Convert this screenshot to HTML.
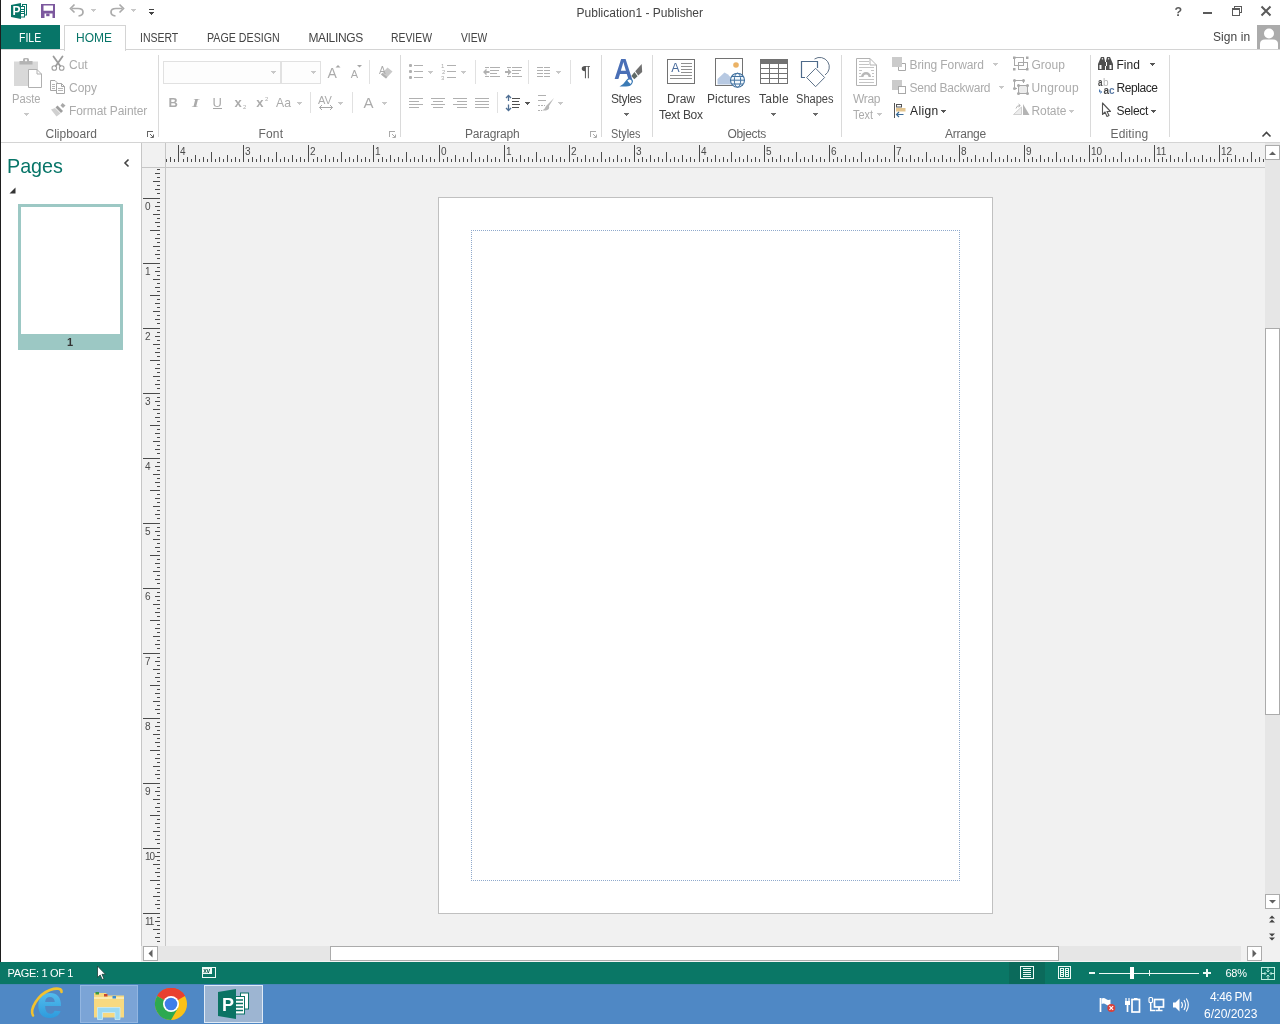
<!DOCTYPE html>
<html lang="en"><head><meta charset="utf-8"><title>Publication1 - Publisher</title>
<style>
html,body{margin:0;padding:0;background:#fff;}
body{width:1280px;height:1024px;overflow:hidden;font-family:"Liberation Sans",sans-serif;font-size:12px;color:#444;}
#app{position:absolute;left:0;top:0;width:1280px;height:1024px;overflow:hidden;background:#fff;}
#app div,#app span.t,#app svg{position:absolute;}
.t{white-space:pre;line-height:1;}
svg{overflow:visible;will-change:transform;}
.sep{width:1px;background:#e1e1e1;}
.gsep{width:1px;background:#dadada;top:55px;height:82px;}
.rl{font-size:10px;color:#4a4a4a;}
#txt,#rl{left:0;top:0;width:1280px;height:1024px;will-change:transform;}

</style></head>
<body>
<div id="app">

<!-- frame.html -->
<!-- window left edge -->
<div style="left:0;top:0;width:1px;height:984px;background:#1e1e1e"></div>
<!-- FILE tab -->
<div style="left:1px;top:25px;width:59px;height:24px;background:#077568"></div>
<!-- ribbon top border -->
<div style="left:1px;top:49px;width:1279px;height:1px;background:#d4d4d4"></div>
<!-- HOME tab -->
<div style="left:64px;top:25px;width:60px;height:25px;background:#fff;border:1px solid #d4d4d4;border-bottom:none;box-sizing:content-box"></div>
<!-- ribbon bottom border -->
<div style="left:1px;top:142px;width:1279px;height:1px;background:#d4d4d4"></div>
<!-- avatar -->
<div style="left:1257px;top:25px;width:23px;height:24px;background:#ababab;overflow:hidden">
 <svg width="23" height="24" viewBox="0 0 23 24"><circle cx="12" cy="8.5" r="5" fill="#fff"/><path d="M3 24 V19 Q3 14.5 8 14.5 H16 Q21 14.5 21 19 V24 Z" fill="#fff"/></svg>
</div>
<!-- group separators -->
<div class="gsep" style="left:158px"></div>
<div class="gsep" style="left:400px"></div>
<div class="gsep" style="left:601px"></div>
<div class="gsep" style="left:652px"></div>
<div class="gsep" style="left:841px"></div>
<div class="gsep" style="left:1090px"></div>
<div class="gsep" style="left:1169px"></div>
<!-- font combos -->
<div style="left:163px;top:61px;width:118px;height:23px;box-sizing:border-box;border:1px solid #e1e1e1;background:#fdfdfd"></div>
<div style="left:281px;top:61px;width:40px;height:23px;box-sizing:border-box;border:1px solid #e1e1e1;background:#fdfdfd"></div>
<!-- small separators -->
<div class="sep" style="left:369px;top:60px;height:24px"></div>
<div class="sep" style="left:310px;top:92px;height:21px"></div>
<div class="sep" style="left:352px;top:92px;height:21px"></div>
<div class="sep" style="left:475px;top:60px;height:24px"></div>
<div class="sep" style="left:528px;top:60px;height:24px"></div>
<div class="sep" style="left:570px;top:60px;height:24px"></div>
<div class="sep" style="left:497px;top:92px;height:21px"></div>

<!-- ribbon_icons.html -->
<svg style="left:0;top:0" width="1280" height="143" viewBox="0 0 1280 143">
<rect x="22.5" y="4.5" width="4" height="10.5" fill="#fff" stroke="#077568" stroke-width="1"/>
<rect x="20.5" y="6.5" width="4" height="10.5" fill="#fff" stroke="#077568" stroke-width="1"/>
<path d="M21 9.5h3M21 11.5h3M21 13.5h3" stroke="#077568" stroke-width="1"/>
<path d="M11 5 L21 3 V19 L11 17 Z" fill="#077568"/>
<text x="12.600" y="15.300" font-family="Liberation Sans, sans-serif" font-weight="700" font-size="12" fill="#fff">P</text>
<path d="M41 4h14v14h-14z M43.5 5.5v5.3h9.5v-5.3z M44.5 13.5v4.5h8v-4.5z" fill="#7c589e" fill-rule="evenodd"/>
<rect x="46.200" y="13.500" width="3.300" height="2.700" fill="#7c589e"/>
<path d="M72 8.5 H78 Q83 8.5 83 12 Q83 15.5 78.5 16" fill="none" stroke="#ababab" stroke-width="1.700"/>
<path d="M74.5 4.5 L70.5 8.5 L74.5 12.5" fill="none" stroke="#ababab" stroke-width="1.700"/>
<path d="M91 9h5v1h-1v1h-1v1h-1v-1h-1v-1h-1z" fill="#c8c8c8" shape-rendering="crispEdges"/>
<path d="M122 8.5 H116 Q111 8.5 111 12 Q111 15.5 115.5 16" fill="none" stroke="#ababab" stroke-width="1.700"/>
<path d="M119.5 4.5 L123.5 8.5 L119.5 12.5" fill="none" stroke="#ababab" stroke-width="1.700"/>
<path d="M131 9h5v1h-1v1h-1v1h-1v-1h-1v-1h-1z" fill="#c8c8c8" shape-rendering="crispEdges"/>
<rect x="149" y="9" width="5" height="1" fill="#444444" shape-rendering="crispEdges"/>
<path d="M149 12h5v1h-1v1h-1v1h-1v-1h-1v-1h-1z" fill="#444444" shape-rendering="crispEdges"/>
<text x="1174.5" y="16" font-family="Liberation Sans, sans-serif" font-weight="700" font-size="12.5" fill="#5a5a5a">?</text>
<rect x="1203" y="12" width="9" height="2" fill="#5a5a5a" shape-rendering="crispEdges"/>
<path d="M1234.5 8.5v-2h7v6h-2 M1232.5 9h7v6.5h-7z" fill="none" stroke="#5a5a5a" stroke-width="1" shape-rendering="crispEdges"/>
<rect x="1232" y="8" width="8" height="2" fill="#5a5a5a" shape-rendering="crispEdges"/>
<rect x="1234" y="6" width="8" height="1" fill="#5a5a5a" shape-rendering="crispEdges"/>
<path d="M1261.5 6.5 L1270.5 15.5 M1270.5 6.5 L1261.5 15.5" stroke="#5a5a5a" stroke-width="2" fill="none"/>
<path d="M1262.5 136.5 L1266.5 132.5 L1270.5 136.5" fill="none" stroke="#444444" stroke-width="1.6"/>
<rect x="14" y="61.5" width="24" height="24.5" fill="#d9d9d9"/>
<path d="M19.5 61h13v3.5h-13z M23 61v-1.5q0-1.5 1.5-1.5h3q1.5 0 1.5 1.5v1.5z" fill="#b4b4b4"/>
<circle cx="26" cy="60.3" r="1.1" fill="#fff"/>
<path d="M28.5 69.5h8.5l4.5 4.5v13.5h-13z" fill="#fff" stroke="#b0b0b0" stroke-width="1"/>
<path d="M37 69.5v4.5h4.5" fill="none" stroke="#b0b0b0" stroke-width="1"/>
<path d="M24 113h5v1h-1v1h-1v1h-1v-1h-1v-1h-1z" fill="#c8c8c8" shape-rendering="crispEdges"/>
<path d="M53.5 56.5 L60.2 66 M62.5 56.5 L55.8 66" fill="none" stroke="#9c9c9c" stroke-width="1.8" stroke-linecap="round"/>
<circle cx="54.3" cy="68" r="2.3" fill="none" stroke="#a0a0a0" stroke-width="1.1"/>
<circle cx="61.7" cy="68" r="2.3" fill="none" stroke="#a0a0a0" stroke-width="1.1"/>
<path d="M50.5 80.5h4.5l2 2v8h-6.500z" fill="#fff" stroke="#a6a6a6" stroke-width="1"/>
<path d="M52 84.500h3M52 86.500h3M52 88.500h3" stroke="#b5b5b5" stroke-width="1"/>
<path d="M56.500 83.500h5l3 3v7h-8z" fill="#fff" stroke="#a6a6a6" stroke-width="1"/>
<path d="M61.500 83.500v3h3" fill="none" stroke="#a6a6a6" stroke-width="1"/>
<path d="M58 88.500h5M58 90.500h5" stroke="#b5b5b5" stroke-width="1"/>
<path d="M62.5 103 L65.5 105.500 L63 108 L60.500 105.500 Z" fill="#a8a8a8"/>
<path d="M57.500 105.500 L63 111 L61 113 L55.500 107.500 Z" fill="#9e9e9e"/>
<path d="M55 108 L60.500 113.500 L56.500 116.500 L51 109.500 Z" fill="#d0d0d0"/>
<path d="M271 71h5v1h-1v1h-1v1h-1v-1h-1v-1h-1z" fill="#c8c8c8" shape-rendering="crispEdges"/>
<path d="M311 71h5v1h-1v1h-1v1h-1v-1h-1v-1h-1z" fill="#c8c8c8" shape-rendering="crispEdges"/>
<rect x="213" y="108" width="9" height="1" fill="#a6a6a6" shape-rendering="crispEdges"/>
<path d="M297 102h5v1h-1v1h-1v1h-1v-1h-1v-1h-1z" fill="#c8c8c8" shape-rendering="crispEdges"/>
<path d="M335.5 67.500 L338 65 L340.500 67.500 Z" fill="#a6a6a6"/>
<path d="M357 65 L359.500 67.500 L362 65 Z" fill="#a6a6a6"/>
<path d="M387.500 67.500 L392.500 71.500 L386 78.500 L381 74.500 Z" fill="#c9c9c9"/>
<path d="M382.300 73 L387.300 77 L386 78.500 L381 74.500 Z" fill="#b0b0b0"/>
<path d="M319.500 107.500 H332.500 M322 105 L319.500 107.500 L322 110 M330 105 L332.500 107.500 L330 110" fill="none" stroke="#a6a6a6" stroke-width="1"/>
<path d="M338 102h5v1h-1v1h-1v1h-1v-1h-1v-1h-1z" fill="#c8c8c8" shape-rendering="crispEdges"/>
<path d="M382 102h5v1h-1v1h-1v1h-1v-1h-1v-1h-1z" fill="#c8c8c8" shape-rendering="crispEdges"/>
<rect x="409" y="64" width="3" height="3" rx="1" fill="#b0b0b0"/>
<rect x="414" y="65" width="9" height="1" fill="#b0b0b0" shape-rendering="crispEdges"/>
<rect x="409" y="70" width="3" height="3" rx="1" fill="#b0b0b0"/>
<rect x="414" y="71" width="9" height="1" fill="#b0b0b0" shape-rendering="crispEdges"/>
<rect x="409" y="76" width="3" height="3" rx="1" fill="#b0b0b0"/>
<rect x="414" y="77" width="9" height="1" fill="#b0b0b0" shape-rendering="crispEdges"/>
<path d="M428 71h5v1h-1v1h-1v1h-1v-1h-1v-1h-1z" fill="#c8c8c8" shape-rendering="crispEdges"/>
<rect x="447" y="65" width="9" height="1" fill="#b0b0b0" shape-rendering="crispEdges"/>
<rect x="447" y="71" width="9" height="1" fill="#b0b0b0" shape-rendering="crispEdges"/>
<rect x="447" y="77" width="9" height="1" fill="#b0b0b0" shape-rendering="crispEdges"/>
<path d="M461 71h5v1h-1v1h-1v1h-1v-1h-1v-1h-1z" fill="#c8c8c8" shape-rendering="crispEdges"/>
<rect x="485" y="67" width="4" height="1" fill="#b0b0b0" shape-rendering="crispEdges"/>
<rect x="490" y="67" width="10" height="1" fill="#b0b0b0" shape-rendering="crispEdges"/>
<rect x="485" y="76" width="4" height="1" fill="#b0b0b0" shape-rendering="crispEdges"/>
<rect x="490" y="76" width="10" height="1" fill="#b0b0b0" shape-rendering="crispEdges"/>
<rect x="490" y="70" width="9" height="1" fill="#b0b0b0" shape-rendering="crispEdges"/>
<rect x="490" y="73" width="7" height="1" fill="#b0b0b0" shape-rendering="crispEdges"/>
<path d="M483 72 L486.500 68.500 V71 H489.500 V73 H486.500 V75.500 Z" fill="#b0b0b0"/>
<rect x="507" y="67" width="4" height="1" fill="#b0b0b0" shape-rendering="crispEdges"/>
<rect x="512" y="67" width="10" height="1" fill="#b0b0b0" shape-rendering="crispEdges"/>
<rect x="507" y="76" width="4" height="1" fill="#b0b0b0" shape-rendering="crispEdges"/>
<rect x="512" y="76" width="10" height="1" fill="#b0b0b0" shape-rendering="crispEdges"/>
<rect x="512" y="70" width="9" height="1" fill="#b0b0b0" shape-rendering="crispEdges"/>
<rect x="512" y="73" width="7" height="1" fill="#b0b0b0" shape-rendering="crispEdges"/>
<path d="M511.500 72 L508 68.500 V71 H505 V73 H508 V75.500 Z" fill="#b0b0b0"/>
<rect x="537" y="67" width="6" height="1" fill="#b0b0b0" shape-rendering="crispEdges"/>
<rect x="544" y="67" width="6" height="1" fill="#b0b0b0" shape-rendering="crispEdges"/>
<rect x="537" y="70" width="6" height="1" fill="#b0b0b0" shape-rendering="crispEdges"/>
<rect x="544" y="70" width="6" height="1" fill="#b0b0b0" shape-rendering="crispEdges"/>
<rect x="537" y="73" width="6" height="1" fill="#b0b0b0" shape-rendering="crispEdges"/>
<rect x="544" y="73" width="6" height="1" fill="#b0b0b0" shape-rendering="crispEdges"/>
<rect x="537" y="76" width="6" height="1" fill="#b0b0b0" shape-rendering="crispEdges"/>
<rect x="544" y="76" width="6" height="1" fill="#b0b0b0" shape-rendering="crispEdges"/>
<path d="M556 71h5v1h-1v1h-1v1h-1v-1h-1v-1h-1z" fill="#c8c8c8" shape-rendering="crispEdges"/>
<rect x="409" y="98" width="14" height="1" fill="#b0b0b0" shape-rendering="crispEdges"/>
<rect x="431" y="98" width="14" height="1" fill="#b0b0b0" shape-rendering="crispEdges"/>
<rect x="453" y="98" width="14" height="1" fill="#b0b0b0" shape-rendering="crispEdges"/>
<rect x="475" y="98" width="14" height="1" fill="#b0b0b0" shape-rendering="crispEdges"/>
<rect x="409" y="101" width="10" height="1" fill="#b0b0b0" shape-rendering="crispEdges"/>
<rect x="433" y="101" width="10" height="1" fill="#b0b0b0" shape-rendering="crispEdges"/>
<rect x="457" y="101" width="10" height="1" fill="#b0b0b0" shape-rendering="crispEdges"/>
<rect x="475" y="101" width="14" height="1" fill="#b0b0b0" shape-rendering="crispEdges"/>
<rect x="409" y="104" width="14" height="1" fill="#b0b0b0" shape-rendering="crispEdges"/>
<rect x="431" y="104" width="14" height="1" fill="#b0b0b0" shape-rendering="crispEdges"/>
<rect x="453" y="104" width="14" height="1" fill="#b0b0b0" shape-rendering="crispEdges"/>
<rect x="475" y="104" width="14" height="1" fill="#b0b0b0" shape-rendering="crispEdges"/>
<rect x="409" y="107" width="10" height="1" fill="#b0b0b0" shape-rendering="crispEdges"/>
<rect x="433" y="107" width="10" height="1" fill="#b0b0b0" shape-rendering="crispEdges"/>
<rect x="457" y="107" width="10" height="1" fill="#b0b0b0" shape-rendering="crispEdges"/>
<rect x="475" y="107" width="14" height="1" fill="#b0b0b0" shape-rendering="crispEdges"/>
<path d="M508.500 96 V101 M506 98 L508.500 95.500 L511 98 M508.500 104.500 V110 M506 108 L508.500 110.500 L511 108" fill="none" stroke="#4f6f94" stroke-width="1.3"/>
<rect x="512" y="98" width="8" height="1" fill="#505050" shape-rendering="crispEdges"/>
<rect x="512" y="101" width="7" height="1" fill="#505050" shape-rendering="crispEdges"/>
<rect x="512" y="104" width="8" height="1" fill="#505050" shape-rendering="crispEdges"/>
<rect x="512" y="107" width="7" height="1" fill="#505050" shape-rendering="crispEdges"/>
<path d="M525 102h5v1h-1v1h-1v1h-1v-1h-1v-1h-1z" fill="#555" shape-rendering="crispEdges"/>
<rect x="538" y="95" width="8" height="1" fill="#b0b0b0" shape-rendering="crispEdges"/>
<rect x="538" y="100" width="8" height="1" fill="#b0b0b0" shape-rendering="crispEdges"/>
<path d="M538 105.500h7M538 110.500h4" stroke="#b0b0b0" stroke-width="1" stroke-dasharray="2 1"/>
<path d="M554 98 L549 106 Q550 109.500 546 110.500 L542 110.500 Q545 109 546.500 105.500 Z" fill="#b8b8b8"/>
<path d="M558 102h5v1h-1v1h-1v1h-1v-1h-1v-1h-1z" fill="#c8c8c8" shape-rendering="crispEdges"/>
<path d="M152.5 131.5 H147.5 V136.5" fill="none" stroke="#666" stroke-width="1" shape-rendering="crispEdges"/>
<path d="M150 134 L153 137 M153.5 134.5 V137.5 H150.5" fill="none" stroke="#666" stroke-width="1"/>
<path d="M394.5 131.5 H389.5 V136.5" fill="none" stroke="#aaa" stroke-width="1" shape-rendering="crispEdges"/>
<path d="M392 134 L395 137 M395.5 134.5 V137.5 H392.5" fill="none" stroke="#aaa" stroke-width="1"/>
<path d="M595.5 131.5 H590.5 V136.5" fill="none" stroke="#aaa" stroke-width="1" shape-rendering="crispEdges"/>
<path d="M593 134 L596 137 M596.5 134.5 V137.5 H593.5" fill="none" stroke="#aaa" stroke-width="1"/>
<path d="M635.2 71.300 L641.700 64 L642.200 72 L638.300 75.600 Z" fill="#707070"/>
<path d="M634.500 72.100 L637.600 76.300 L634.300 79.300 L631.300 76 Z" fill="#606a66" stroke="#fff" stroke-width="1" paint-order="stroke"/>
<path d="M619.500 86.500 Q624 84 626 80.500 Q628 77.300 631 78.500 Q634 80 632.500 83 Q631 86.500 626 86.500 Z" fill="#3b7ab5" stroke="#fff" stroke-width="1.400" paint-order="stroke"/>
<path d="M627.300 80.800 Q629.500 78.500 631.300 80.300 Q632.700 82 630.500 84 Z" fill="#fff"/>
<path d="M624 113h5v1h-1v1h-1v1h-1v-1h-1v-1h-1z" fill="#6a6a6a" shape-rendering="crispEdges"/>
<rect x="667.500" y="59.500" width="27" height="24" fill="#fff" stroke="#727272" stroke-width="1"/>
<rect x="681" y="63" width="11" height="1" fill="#909090" shape-rendering="crispEdges"/>
<rect x="681" y="66" width="11" height="1" fill="#909090" shape-rendering="crispEdges"/>
<rect x="681" y="69" width="11" height="1" fill="#909090" shape-rendering="crispEdges"/>
<rect x="681" y="72" width="11" height="1" fill="#909090" shape-rendering="crispEdges"/>
<rect x="670" y="75" width="22" height="1" fill="#909090" shape-rendering="crispEdges"/>
<rect x="670" y="78" width="22" height="1" fill="#909090" shape-rendering="crispEdges"/>
<rect x="715.500" y="58.500" width="27" height="27" fill="#fff" stroke="#727272" stroke-width="1"/>
<circle cx="736" cy="65" r="2.800" fill="#ebb265"/>
<path d="M717.500 84.500 V79 L724.500 72.500 L728 74.500 L733 80 V84.500 Z" fill="#b7c9e2"/>
<circle cx="737.500" cy="80.200" r="7" fill="#f2f8fd" stroke="#41719f" stroke-width="1.1"/>
<ellipse cx="737.500" cy="80.200" rx="3.200" ry="7" fill="none" stroke="#41719f" stroke-width="1"/>
<path d="M730.500 80.200 H744.500 M731.800 76.500 H743.200 M731.800 84 H743.200" fill="none" stroke="#41719f" stroke-width="1"/>
<rect x="760.500" y="59.500" width="27" height="24" fill="#fff" stroke="#727272" stroke-width="1"/>
<rect x="760" y="59" width="28" height="5" fill="#727272"/>
<path d="M760 68.500h28M760 73.500h28M760 78.500h28M769.500 64v19M778.500 64v19" stroke="#727272" stroke-width="1" fill="none"/>
<path d="M771 113h5v1h-1v1h-1v1h-1v-1h-1v-1h-1z" fill="#6a6a6a" shape-rendering="crispEdges"/>
<path d="M814.500 59 A9 9 0 1 1 825 75" fill="none" stroke="#5f7186" stroke-width="1"/>
<path d="M805 77.500 H801.500 V61.500 H817.500 V68" fill="none" stroke="#4d6a8a" stroke-width="1.2"/>
<path d="M815.600 68.300 L824.600 77.500 L815.600 86.700 L806.600 77.500 Z" fill="#fff" stroke="#5b7088" stroke-width="1"/>
<path d="M813 113h5v1h-1v1h-1v1h-1v-1h-1v-1h-1z" fill="#6a6a6a" shape-rendering="crispEdges"/>
<path d="M856.500 58.500 H870 L876.500 65 V85.500 H856.500 Z" fill="#fff" stroke="#b2b2b2" stroke-width="1"/>
<path d="M870 58.500 V65 H876.500" fill="none" stroke="#b2b2b2" stroke-width="1"/>
<rect x="859" y="61" width="10" height="1" fill="#c4c4c4" shape-rendering="crispEdges"/>
<rect x="859" y="64" width="10" height="1" fill="#c4c4c4" shape-rendering="crispEdges"/>
<rect x="859" y="67" width="15" height="1" fill="#c4c4c4" shape-rendering="crispEdges"/>
<rect x="859" y="70" width="3" height="1" fill="#c4c4c4" shape-rendering="crispEdges"/>
<rect x="871" y="70" width="3" height="1" fill="#c4c4c4" shape-rendering="crispEdges"/>
<rect x="859" y="73" width="2" height="1" fill="#c4c4c4" shape-rendering="crispEdges"/>
<rect x="872" y="73" width="2" height="1" fill="#c4c4c4" shape-rendering="crispEdges"/>
<rect x="859" y="76" width="2" height="1" fill="#c4c4c4" shape-rendering="crispEdges"/>
<rect x="872" y="76" width="2" height="1" fill="#c4c4c4" shape-rendering="crispEdges"/>
<rect x="859" y="79" width="15" height="1" fill="#c4c4c4" shape-rendering="crispEdges"/>
<rect x="859" y="82" width="15" height="1" fill="#c4c4c4" shape-rendering="crispEdges"/>
<path d="M861 77 A5 5 0 0 1 871 77 H868.500 A2.500 2.500 0 0 0 863.500 77 Z" fill="#b8b8b8"/>
<path d="M877 113h5v1h-1v1h-1v1h-1v-1h-1v-1h-1z" fill="#c8c8c8" shape-rendering="crispEdges"/>
<path d="M901.500 63.500 H905.500 V70.500 H898.500 V67" fill="none" stroke="#a8a8a8" stroke-width="1"/>
<rect x="892" y="57" width="10" height="10" fill="#cbcbcb"/>
<path d="M993 63h5v1h-1v1h-1v1h-1v-1h-1v-1h-1z" fill="#c8c8c8" shape-rendering="crispEdges"/>
<rect x="892" y="80" width="10" height="10" fill="#cbcbcb"/>
<rect x="898.500" y="86.500" width="7" height="7" fill="#fff" stroke="#a8a8a8" stroke-width="1"/>
<path d="M999 86h5v1h-1v1h-1v1h-1v-1h-1v-1h-1z" fill="#c8c8c8" shape-rendering="crispEdges"/>
<rect x="894" y="103" width="1" height="15" fill="#555" shape-rendering="crispEdges"/>
<rect x="896.500" y="104.500" width="5" height="2.500" fill="#fff" stroke="#555" stroke-width="1"/>
<rect x="896" y="108" width="9.500" height="3.500" fill="#e3c590"/>
<path d="M896.500 114.500 H903.500 M899 112 L896.500 114.500 L899 117" fill="none" stroke="#3a6a96" stroke-width="1.2"/>
<path d="M941 110h5v1h-1v1h-1v1h-1v-1h-1v-1h-1z" fill="#555" shape-rendering="crispEdges"/>
<rect x="1014.500" y="57.500" width="9" height="8" fill="none" stroke="#a8a8a8" stroke-width="1"/>
<rect x="1018.500" y="62.500" width="9" height="7" fill="none" stroke="#a8a8a8" stroke-width="1"/>
<rect x="1013" y="56.5" width="2.500" height="2.500" fill="#a8a8a8"/>
<rect x="1026" y="56.5" width="2.500" height="2.500" fill="#a8a8a8"/>
<rect x="1013" y="68" width="2.500" height="2.500" fill="#a8a8a8"/>
<rect x="1026" y="68" width="2.500" height="2.500" fill="#a8a8a8"/>
<path d="M1023.500 83 V80.500 H1014.500 V88.500 H1017" fill="none" stroke="#a8a8a8" stroke-width="1"/>
<rect x="1018.500" y="85.500" width="9" height="8" fill="#ececec" stroke="#a8a8a8" stroke-width="1"/>
<circle cx="1014.5" cy="80.5" r="1.500" fill="#a8a8a8"/>
<circle cx="1023.5" cy="80.5" r="1.500" fill="#a8a8a8"/>
<circle cx="1014.5" cy="88.5" r="1.500" fill="#a8a8a8"/>
<circle cx="1018.5" cy="85.5" r="1.500" fill="#a8a8a8"/>
<circle cx="1027.5" cy="85.5" r="1.500" fill="#a8a8a8"/>
<circle cx="1018.5" cy="93.5" r="1.500" fill="#a8a8a8"/>
<circle cx="1027.5" cy="93.5" r="1.500" fill="#a8a8a8"/>
<path d="M1013.500 114.500 H1021.500 V107 Z" fill="#ededed" stroke="#cfcfcf" stroke-width="1"/>
<path d="M1023 104 V115 H1029.500 Z" fill="#b4b4b4"/>
<path d="M1016 108.500 Q1016.500 105.500 1020 105.500 M1018.500 104 L1020.300 105.500 L1018.500 107" fill="none" stroke="#b4b4b4" stroke-width="1"/>
<path d="M1069 110h5v1h-1v1h-1v1h-1v-1h-1v-1h-1z" fill="#c8c8c8" shape-rendering="crispEdges"/>
<path d="M1101 57 h3 l1 4 v9 h-7 v-6 z M1110 57 h-3 l-1 4 v9 h7 v-6 z M1104 62 h3 v4 h-3 z" fill="#505050"/>
<rect x="1099.500" y="65" width="2" height="4" fill="#fff"/><rect x="1109.500" y="65" width="2" height="4" fill="#fff"/>
<rect x="1101.800" y="58.200" width="1.200" height="1.200" fill="#fff"/><rect x="1108" y="58.200" width="1.200" height="1.200" fill="#fff"/>
<path d="M1150 63h5v1h-1v1h-1v1h-1v-1h-1v-1h-1z" fill="#555" shape-rendering="crispEdges"/>
<path d="M1099.500 89.500 V92 H1101.500 M1100.300 90.800 L1101.700 92 L1100.300 93.300" fill="none" stroke="#4a78b0" stroke-width="1"/>
<path d="M1102.500 103 V114.500 L1105 112 L1107 116.500 L1109 115.500 L1107 111.500 H1110.500 Z" fill="#fff" stroke="#555" stroke-width="1.100" stroke-linejoin="round"/>
<path d="M1151 110h5v1h-1v1h-1v1h-1v-1h-1v-1h-1z" fill="#555" shape-rendering="crispEdges"/>
</svg>
<!-- work.html -->
<div style="left:18px;top:204px;width:105px;height:146px;background:#9cc8c4"></div>
<div style="left:21px;top:207px;width:99px;height:127px;background:#fff"></div>
<svg style="left:123px;top:158px" width="8" height="10" viewBox="0 0 8 10"><path d="M5.5 1.5 L2 5 L5.5 8.5" fill="none" stroke="#444" stroke-width="1.6"/></svg>
<svg style="left:9px;top:187px" width="7" height="7" viewBox="0 0 7 7"><path d="M6.5 0.5 V6.5 H0.5 Z" fill="#333"/></svg>
<div style="left:141px;top:143px;width:1139px;height:819px;background:#f1f1f1"></div>
<div style="left:141px;top:143px;width:1px;height:803px;background:#c6c6c6"></div>
<div style="left:165px;top:143px;width:1px;height:803px;background:#c6c6c6"></div>
<div style="left:141px;top:167px;width:1124px;height:1px;background:#c6c6c6"></div>
<svg style="left:0;top:0" width="1280" height="962" viewBox="0 0 1280 962"><path d="M439.5 145v17M443.5 159v3M447.5 157v5M451.5 159v3M455.5 155v7M459.5 159v3M463.5 157v5M467.5 159v3M471.5 152v10M475.5 159v3M479.5 157v5M483.5 159v3M487.5 155v7M491.5 159v3M495.5 157v5M499.5 159v3M504.5 145v17M508.5 159v3M512.5 157v5M516.5 159v3M520.5 155v7M524.5 159v3M528.5 157v5M532.5 159v3M536.5 152v10M540.5 159v3M544.5 157v5M548.5 159v3M552.5 155v7M556.5 159v3M560.5 157v5M564.5 159v3M569.5 145v17M573.5 159v3M577.5 157v5M581.5 159v3M585.5 155v7M589.5 159v3M593.5 157v5M597.5 159v3M601.5 152v10M605.5 159v3M609.5 157v5M613.5 159v3M617.5 155v7M621.5 159v3M625.5 157v5M629.5 159v3M634.5 145v17M638.5 159v3M642.5 157v5M646.5 159v3M650.5 155v7M654.5 159v3M658.5 157v5M662.5 159v3M666.5 152v10M670.5 159v3M674.5 157v5M678.5 159v3M682.5 155v7M686.5 159v3M690.5 157v5M694.5 159v3M699.5 145v17M703.5 159v3M707.5 157v5M711.5 159v3M715.5 155v7M719.5 159v3M723.5 157v5M727.5 159v3M731.5 152v10M735.5 159v3M739.5 157v5M743.5 159v3M747.5 155v7M751.5 159v3M755.5 157v5M759.5 159v3M764.5 145v17M768.5 159v3M772.5 157v5M776.5 159v3M780.5 155v7M784.5 159v3M788.5 157v5M792.5 159v3M796.5 152v10M800.5 159v3M804.5 157v5M808.5 159v3M812.5 155v7M816.5 159v3M820.5 157v5M824.5 159v3M829.5 145v17M833.5 159v3M837.5 157v5M841.5 159v3M845.5 155v7M849.5 159v3M853.5 157v5M857.5 159v3M861.5 152v10M865.5 159v3M869.5 157v5M873.5 159v3M877.5 155v7M881.5 159v3M885.5 157v5M889.5 159v3M894.5 145v17M898.5 159v3M902.5 157v5M906.5 159v3M910.5 155v7M914.5 159v3M918.5 157v5M922.5 159v3M926.5 152v10M930.5 159v3M934.5 157v5M938.5 159v3M942.5 155v7M946.5 159v3M950.5 157v5M954.5 159v3M959.5 145v17M963.5 159v3M967.5 157v5M971.5 159v3M975.5 155v7M979.5 159v3M983.5 157v5M987.5 159v3M991.5 152v10M995.5 159v3M999.5 157v5M1003.5 159v3M1007.5 155v7M1011.5 159v3M1015.5 157v5M1019.5 159v3M1024.5 145v17M1028.5 159v3M1032.5 157v5M1036.5 159v3M1040.5 155v7M1044.5 159v3M1048.5 157v5M1052.5 159v3M1056.5 152v10M1060.5 159v3M1064.5 157v5M1068.5 159v3M1072.5 155v7M1076.5 159v3M1080.5 157v5M1084.5 159v3M1089.5 145v17M1093.5 159v3M1097.5 157v5M1101.5 159v3M1105.5 155v7M1109.5 159v3M1113.5 157v5M1117.5 159v3M1121.5 152v10M1125.5 159v3M1129.5 157v5M1133.5 159v3M1137.5 155v7M1141.5 159v3M1145.5 157v5M1149.5 159v3M1154.5 145v17M1158.5 159v3M1162.5 157v5M1166.5 159v3M1170.5 155v7M1174.5 159v3M1178.5 157v5M1182.5 159v3M1186.5 152v10M1190.5 159v3M1194.5 157v5M1198.5 159v3M1202.5 155v7M1206.5 159v3M1210.5 157v5M1214.5 159v3M1219.5 145v17M1223.5 159v3M1227.5 157v5M1231.5 159v3M1235.5 155v7M1239.5 159v3M1243.5 157v5M1247.5 159v3M1251.5 152v10M1255.5 159v3M1259.5 157v5M1263.5 159v3M434.5 159v3M430.5 157v5M426.5 159v3M422.5 155v7M418.5 159v3M414.5 157v5M410.5 159v3M406.5 152v10M402.5 159v3M398.5 157v5M394.5 159v3M390.5 155v7M386.5 159v3M382.5 157v5M378.5 159v3M373.5 145v17M369.5 159v3M365.5 157v5M361.5 159v3M357.5 155v7M353.5 159v3M349.5 157v5M345.5 159v3M341.5 152v10M337.5 159v3M333.5 157v5M329.5 159v3M325.5 155v7M321.5 159v3M317.5 157v5M313.5 159v3M308.5 145v17M304.5 159v3M300.5 157v5M296.5 159v3M292.5 155v7M288.5 159v3M284.5 157v5M280.5 159v3M276.5 152v10M272.5 159v3M268.5 157v5M264.5 159v3M260.5 155v7M256.5 159v3M252.5 157v5M248.5 159v3M243.5 145v17M239.5 159v3M235.5 157v5M231.5 159v3M227.5 155v7M223.5 159v3M219.5 157v5M215.5 159v3M211.5 152v10M207.5 159v3M203.5 157v5M199.5 159v3M195.5 155v7M191.5 159v3M187.5 157v5M183.5 159v3M178.5 145v17M174.5 159v3M170.5 157v5M166.5 159v3M143 198.5h17M157 202.5h3M155 206.5h5M157 210.5h3M153 214.5h7M157 218.5h3M155 222.5h5M157 226.5h3M150 230.5h10M157 234.5h3M155 238.5h5M157 242.5h3M153 246.5h7M157 250.5h3M155 254.5h5M157 258.5h3M143 263.5h17M157 267.5h3M155 271.5h5M157 275.5h3M153 279.5h7M157 283.5h3M155 287.5h5M157 291.5h3M150 295.5h10M157 299.5h3M155 303.5h5M157 307.5h3M153 311.5h7M157 315.5h3M155 319.5h5M157 323.5h3M143 328.5h17M157 332.5h3M155 336.5h5M157 340.5h3M153 344.5h7M157 348.5h3M155 352.5h5M157 356.5h3M150 360.5h10M157 364.5h3M155 368.5h5M157 372.5h3M153 376.5h7M157 380.5h3M155 384.5h5M157 388.5h3M143 393.5h17M157 397.5h3M155 401.5h5M157 405.5h3M153 409.5h7M157 413.5h3M155 417.5h5M157 421.5h3M150 425.5h10M157 429.5h3M155 433.5h5M157 437.5h3M153 441.5h7M157 445.5h3M155 449.5h5M157 453.5h3M143 458.5h17M157 462.5h3M155 466.5h5M157 470.5h3M153 474.5h7M157 478.5h3M155 482.5h5M157 486.5h3M150 490.5h10M157 494.5h3M155 498.5h5M157 502.5h3M153 506.5h7M157 510.5h3M155 514.5h5M157 518.5h3M143 523.5h17M157 527.5h3M155 531.5h5M157 535.5h3M153 539.5h7M157 543.5h3M155 547.5h5M157 551.5h3M150 555.5h10M157 559.5h3M155 563.5h5M157 567.5h3M153 571.5h7M157 575.5h3M155 579.5h5M157 583.5h3M143 588.5h17M157 592.5h3M155 596.5h5M157 600.5h3M153 604.5h7M157 608.5h3M155 612.5h5M157 616.5h3M150 620.5h10M157 624.5h3M155 628.5h5M157 632.5h3M153 636.5h7M157 640.5h3M155 644.5h5M157 648.5h3M143 653.5h17M157 657.5h3M155 661.5h5M157 665.5h3M153 669.5h7M157 673.5h3M155 677.5h5M157 681.5h3M150 685.5h10M157 689.5h3M155 693.5h5M157 697.5h3M153 701.5h7M157 705.5h3M155 709.5h5M157 713.5h3M143 718.5h17M157 722.5h3M155 726.5h5M157 730.5h3M153 734.5h7M157 738.5h3M155 742.5h5M157 746.5h3M150 750.5h10M157 754.5h3M155 758.5h5M157 762.5h3M153 766.5h7M157 770.5h3M155 774.5h5M157 778.5h3M143 783.5h17M157 787.5h3M155 791.5h5M157 795.5h3M153 799.5h7M157 803.5h3M155 807.5h5M157 811.5h3M150 815.5h10M157 819.5h3M155 823.5h5M157 827.5h3M153 831.5h7M157 835.5h3M155 839.5h5M157 843.5h3M143 848.5h17M157 852.5h3M155 856.5h5M157 860.5h3M153 864.5h7M157 868.5h3M155 872.5h5M157 876.5h3M150 880.5h10M157 884.5h3M155 888.5h5M157 892.5h3M153 896.5h7M157 900.5h3M155 904.5h5M157 908.5h3M143 913.5h17M157 917.5h3M155 921.5h5M157 925.5h3M153 929.5h7M157 933.5h3M155 937.5h5M157 941.5h3M157 193.5h3M155 189.5h5M157 185.5h3M153 181.5h7M157 177.5h3M155 173.5h5M157 169.5h3" stroke="#4a4a4a" stroke-width="1" fill="none" shape-rendering="crispEdges"/></svg>
<div id="rl">
<span class="t rl" style="left:441px;top:147px">0</span>
<span class="t rl" style="left:506px;top:147px">1</span>
<span class="t rl" style="left:571px;top:147px">2</span>
<span class="t rl" style="left:636px;top:147px">3</span>
<span class="t rl" style="left:701px;top:147px">4</span>
<span class="t rl" style="left:766px;top:147px">5</span>
<span class="t rl" style="left:831px;top:147px">6</span>
<span class="t rl" style="left:896px;top:147px">7</span>
<span class="t rl" style="left:961px;top:147px">8</span>
<span class="t rl" style="left:1026px;top:147px">9</span>
<span class="t rl" style="left:1091px;top:147px">10</span>
<span class="t rl" style="left:1156px;top:147px">11</span>
<span class="t rl" style="left:1221px;top:147px">12</span>
<span class="t rl" style="left:375px;top:147px">1</span>
<span class="t rl" style="left:310px;top:147px">2</span>
<span class="t rl" style="left:245px;top:147px">3</span>
<span class="t rl" style="left:180px;top:147px">4</span>
<span class="t rl" style="left:145px;top:202px">0</span>
<span class="t rl" style="left:145px;top:267px">1</span>
<span class="t rl" style="left:145px;top:332px">2</span>
<span class="t rl" style="left:145px;top:397px">3</span>
<span class="t rl" style="left:145px;top:462px">4</span>
<span class="t rl" style="left:145px;top:527px">5</span>
<span class="t rl" style="left:145px;top:592px">6</span>
<span class="t rl" style="left:145px;top:657px">7</span>
<span class="t rl" style="left:145px;top:722px">8</span>
<span class="t rl" style="left:145px;top:787px">9</span>
<span class="t rl" style="left:145px;letter-spacing:-1px;top:852px">10</span>
<span class="t rl" style="left:145px;letter-spacing:-1px;top:917px">11</span>
</div>
<div style="left:438px;top:197px;width:555px;height:717px;box-sizing:border-box;background:#fff;border:1px solid #c0c0c0"></div>
<div style="left:471px;top:230px;width:489px;height:651px;box-sizing:border-box;border:1px dotted #8fa9cc"></div>
<div style="left:1265px;top:143px;width:15px;height:752px;background:#e6e6e6"></div>
<div style="left:1265px;top:145px;width:15px;height:15px;box-sizing:border-box;background:#fff;border:1px solid #ababab"></div>
<svg style="left:1265px;top:145px" width="15" height="15" viewBox="0 0 15 15"><path d="M4 10 L7.5 6.5 L11 10 Z" fill="#606060"/></svg>
<div style="left:1265px;top:328px;width:15px;height:387px;box-sizing:border-box;background:#fff;border:1px solid #ababab"></div>
<div style="left:1265px;top:894px;width:15px;height:15px;box-sizing:border-box;background:#fff;border:1px solid #ababab"></div>
<svg style="left:1265px;top:894px" width="15" height="15" viewBox="0 0 15 15"><path d="M4 6 L7.5 9.5 L11 6 Z" fill="#606060"/></svg>
<svg style="left:1267px;top:914px" width="10" height="28" viewBox="0 0 10 28"><path d="M2 4.5 L5 1.5 L8 4.5 Z M2 8.5 L5 5.5 L8 8.5 Z M2 19.5 L5 22.5 L8 19.5 Z M2 23.5 L5 26.5 L8 23.5 Z" fill="#444"/></svg>
<div style="left:141px;top:946px;width:1100px;height:16px;background:#e6e6e6"></div>
<div style="left:143px;top:946px;width:15px;height:15px;box-sizing:border-box;background:#fff;border:1px solid #ababab"></div>
<svg style="left:143px;top:946px" width="15" height="15" viewBox="0 0 15 15"><path d="M9.5 3.5 L5.5 7.5 L9.5 11.5 Z" fill="#606060"/></svg>
<div style="left:1247px;top:946px;width:15px;height:15px;box-sizing:border-box;background:#fff;border:1px solid #ababab"></div>
<svg style="left:1247px;top:946px" width="15" height="15" viewBox="0 0 15 15"><path d="M5.5 3.5 L9.5 7.5 L5.5 11.5 Z" fill="#606060"/></svg>
<div style="left:330px;top:946px;width:729px;height:15px;box-sizing:border-box;background:#fff;border:1px solid #ababab"></div>
<!-- status.html -->
<div style="left:141px;top:961px;width:1139px;height:1px;background:#f4f4f4"></div>
<div style="left:0;top:962px;width:1280px;height:22px;background:#0a7766"></div>
<div style="left:1009px;top:962px;width:36px;height:22px;background:#0b6a5b"></div>
<svg style="left:0;top:962px" width="1280" height="22" viewBox="0 962 1280 22">
<path d="M97.500 966 V977.500 L100.200 975 L102.200 979.500 L104 978.700 L102 974.300 H105.500 Z" fill="#fff" stroke="#1b3f39" stroke-width="0.8" stroke-linejoin="round"/>
<rect x="202.500" y="967.500" width="13" height="10" fill="none" stroke="#eefaf6" stroke-width="1"/>
<rect x="203" y="968" width="9" height="6" fill="#eefaf6"/>
<text x="203.300" y="973.300" font-family="Liberation Sans, sans-serif" font-size="6.500" font-weight="700" fill="#0a5a4c" letter-spacing="-0.300">xv</text>
<rect x="1020.500" y="966.500" width="13" height="12" fill="none" stroke="#eefaf6" stroke-width="1"/>
<path d="M1023 968.500h8M1023 970.500h8M1023 972.500h8M1023 974.500h8M1023 976.500h8" stroke="#eefaf6" stroke-width="1" shape-rendering="crispEdges"/>
<rect x="1058.500" y="966.500" width="12" height="12" fill="none" stroke="#eefaf6" stroke-width="1"/>
<rect x="1060.500" y="968.500" width="3" height="8" fill="none" stroke="#eefaf6" stroke-width="1"/>
<rect x="1065.500" y="968.500" width="3" height="8" fill="none" stroke="#eefaf6" stroke-width="1"/>
<path d="M1060 970.500h4M1060 972.500h4M1060 974.500h4M1065 970.500h4M1065 972.500h4M1065 974.500h4" stroke="#eefaf6" stroke-width="1" shape-rendering="crispEdges"/>
<rect x="1089" y="972" width="6" height="2" fill="#eefaf6"/>
<rect x="1099" y="973" width="100" height="1" fill="#eefaf6" shape-rendering="crispEdges"/>
<rect x="1149" y="970" width="1" height="6" fill="#eefaf6" shape-rendering="crispEdges"/>
<rect x="1130" y="967" width="4" height="12" fill="#fff"/>
<path d="M1203 972h3v-3h2v3h3v2h-3v3h-2v-3h-3z" fill="#eefaf6"/>
<rect x="1261.500" y="967.500" width="13" height="12" fill="none" stroke="#bfeee0" stroke-width="1"/>
<path d="M1268 968v3.500M1268 979v-3.500M1262 973.500h3.500M1274 973.500h-3.500 M1266.500 970.500l1.500 1.500l1.500 -1.500 M1266.500 976.500l1.500 -1.500l1.500 1.500 M1264.500 972l1.500 1.500l-1.500 1.500 M1271.500 972l-1.500 1.500l1.500 1.500" fill="none" stroke="#bfeee0" stroke-width="1"/>
</svg>
<!-- taskbar.html -->
<div style="left:0;top:984px;width:1280px;height:40px;background:#4f88c5"></div>
<div style="left:0;top:984px;width:1280px;height:1px;background:#4a86b8"></div>
<div style="left:80px;top:985px;width:58px;height:38px;box-sizing:border-box;background:#7ba4d6;border:1px solid #93b6e1"></div>
<div style="left:204px;top:985px;width:59px;height:38px;box-sizing:border-box;background:#9db5d2;border:1px solid #dfeaf6"></div>
<svg style="left:0;top:984px" width="1280" height="40" viewBox="0 984 1280 40">
<defs><linearGradient id="ieg" x1="0" y1="0" x2="0" y2="1"><stop offset="0" stop-color="#6fd3f7"/><stop offset="1" stop-color="#1f8fd8"/></linearGradient></defs>
<text x="36.500" y="1017.500" font-family="Liberation Sans, sans-serif" font-weight="700" font-size="47" fill="url(#ieg)">e</text>
<path d="M33 1015.500 C29.500 1009 38 994.500 50 990 C57 987.500 62 988.500 61.500 992" fill="none" stroke="#f2c230" stroke-width="2.600" stroke-linecap="round"/>
<path d="M94 993 h12 l2 2.500 h16 v22 h-30 z" fill="#f7d980"/>
<path d="M94 997 h30 v2 h-30z" fill="#fbeab0"/>
<rect x="95.500" y="992" width="3.500" height="2.500" fill="#3c9a3c"/><rect x="104" y="994" width="3.500" height="2.500" fill="#c8452f"/><rect x="112.500" y="996" width="3.500" height="2.500" fill="#3f8fd0"/>
<path d="M97.500 1007.500 h22.500 v12 h-5 v-7 h-12.500 v7 h-5 z" fill="#9ad9f3" stroke="#c9ecf9" stroke-width="0.8"/>
<circle cx="171" cy="1004" r="16" fill="#fbc116"/>
<path d="M171 1004 L157.140 996 A16 16 0 0 1 184.860 996 Z" fill="#e8402f"/>
<path d="M171 988 A16 16 0 0 1 184.860 996 L171 996 Z" fill="#e8402f"/>
<path d="M171 1004 L157.140 996 A16 16 0 0 0 171 1020 L178 1008 Z" fill="#2da94f"/>
<path d="M157.140 996 A16 16 0 0 1 184.860 996 L171 996 Z" fill="#e8402f"/>
<circle cx="171" cy="1004" r="8" fill="#fff"/><circle cx="171" cy="1004" r="6.300" fill="#3f7ee8"/>
<rect x="240.500" y="993" width="8" height="16" fill="#fff" stroke="#0b7364" stroke-width="1"/>
<rect x="235.500" y="996.500" width="9" height="17.500" fill="#fff" stroke="#0b7364" stroke-width="1"/>
<path d="M236 1000h7M236 1003.500h7M236 1007h7M236 1010.500h7" stroke="#0b7364" stroke-width="1.500"/>
<path d="M218 992 L236 989 V1019 L218 1016 Z" fill="#0b7364"/>
<text x="222" y="1010.500" font-family="Liberation Sans, sans-serif" font-weight="700" font-size="18" fill="#fff">P</text>
<path d="M1100.500 998 V1012" stroke="#fff" stroke-width="1.700"/>
<path d="M1101.500 998.500 Q1104 997.500 1106 999 Q1108 1000.500 1110.500 999.500 V1005 Q1108 1006 1106 1004.500 Q1104 1003 1101.500 1004 Z" fill="#fff"/>
<circle cx="1111.300" cy="1008" r="4" fill="#d9413a"/><path d="M1109.500 1006.200 l3.600 3.600 M1113.100 1006.200 l-3.600 3.600" stroke="#fff" stroke-width="1.200"/>
<path d="M1126 998v3 M1129 998v3" stroke="#fff" stroke-width="1.200"/><rect x="1125" y="1001" width="5" height="4" fill="#fff"/><path d="M1127.500 1005v7" stroke="#fff" stroke-width="1.700"/>
<rect x="1132" y="999.500" width="7.500" height="12.500" fill="none" stroke="#fff" stroke-width="1.700"/><rect x="1134" y="998" width="3.500" height="1.500" fill="#fff"/>
<rect x="1154.500" y="999.500" width="9" height="7.500" fill="none" stroke="#fff" stroke-width="1.700"/><path d="M1159 1007v3 M1155.500 1010.500h7" stroke="#fff" stroke-width="1.700"/>
<rect x="1149" y="997.500" width="3.500" height="5" rx="1" fill="none" stroke="#fff" stroke-width="1.100"/><path d="M1150.700 1002.500 V1010.500 H1155" fill="none" stroke="#fff" stroke-width="1.500"/>
<path d="M1173 1002.500 h2.500 l4 -4 v13 l-4 -4 h-2.500 z" fill="#fff"/>
<path d="M1181.500 1002 q1.800 3 0 6 M1184 1000 q3 5 0 10 M1186.300 998.500 q4 6.500 0 13" fill="none" stroke="#fff" stroke-width="1.100"/>
</svg>
<!-- text labels -->
<div id="txt">
<span class="t" style="left:576.5px;top:7px;font-size:12px;color:#444444;letter-spacing:0.02px">Publication1 - Publisher</span>
<span class="t" style="left:19.1px;top:32px;font-size:12px;color:#fff;letter-spacing:0.00px;transform:scaleX(0.875);transform-origin:0 0">FILE</span>
<span class="t" style="left:76.0px;top:32px;font-size:12px;color:#077568;letter-spacing:0.00px">HOME</span>
<span class="t" style="left:140.1px;top:32px;font-size:12px;color:#444444;letter-spacing:0.00px;transform:scaleX(0.874);transform-origin:0 0">INSERT</span>
<span class="t" style="left:207.4px;top:32px;font-size:12px;color:#444444;letter-spacing:0.00px;transform:scaleX(0.889);transform-origin:0 0">PAGE DESIGN</span>
<span class="t" style="left:308.4px;top:32px;font-size:12px;color:#444444;letter-spacing:-0.37px">MAILINGS</span>
<span class="t" style="left:391.3px;top:32px;font-size:12px;color:#444444;letter-spacing:0.00px;transform:scaleX(0.865);transform-origin:0 0">REVIEW</span>
<span class="t" style="left:461.0px;top:32px;font-size:12px;color:#444444;letter-spacing:0.00px;transform:scaleX(0.855);transform-origin:0 0">VIEW</span>
<span class="t" style="left:1213.0px;top:31px;font-size:12px;color:#444444;letter-spacing:0.08px">Sign in</span>
<span class="t" style="left:69.0px;top:59px;font-size:12px;color:#ababab;letter-spacing:0.00px">Cut</span>
<span class="t" style="left:69.0px;top:82px;font-size:12px;color:#ababab;letter-spacing:0.00px">Copy</span>
<span class="t" style="left:69.0px;top:105px;font-size:12px;color:#ababab;letter-spacing:-0.08px">Format Painter</span>
<span class="t" style="left:12.1px;top:93px;font-size:12px;color:#ababab;letter-spacing:0.00px;transform:scaleX(0.931);transform-origin:0 0">Paste</span>
<span class="t" style="left:45.5px;top:128px;font-size:12px;color:#666666;letter-spacing:0.00px">Clipboard</span>
<span class="t" style="left:258.4px;top:128px;font-size:12px;color:#666666;letter-spacing:0.20px">Font</span>
<span class="t" style="left:465.0px;top:128px;font-size:12px;color:#666666;letter-spacing:-0.16px">Paragraph</span>
<span class="t" style="left:611.0px;top:93px;font-size:12px;color:#444444;letter-spacing:-0.40px">Styles</span>
<span class="t" style="left:611.1px;top:128px;font-size:12px;color:#666666;letter-spacing:0.00px;transform:scaleX(0.903);transform-origin:0 0">Styles</span>
<span class="t" style="left:667.0px;top:93px;font-size:12px;color:#444444;letter-spacing:0.00px">Draw</span>
<span class="t" style="left:659.0px;top:109px;font-size:12px;color:#444444;letter-spacing:-0.29px">Text Box</span>
<span class="t" style="left:707.0px;top:93px;font-size:12px;color:#444444;letter-spacing:0.00px">Pictures</span>
<span class="t" style="left:759.0px;top:93px;font-size:12px;color:#444444;letter-spacing:0.25px">Table</span>
<span class="t" style="left:796.1px;top:93px;font-size:12px;color:#444444;letter-spacing:0.00px;transform:scaleX(0.923);transform-origin:0 0">Shapes</span>
<span class="t" style="left:727.5px;top:128px;font-size:12px;color:#666666;letter-spacing:-0.33px">Objects</span>
<span class="t" style="left:853.0px;top:93px;font-size:12px;color:#ababab;letter-spacing:-0.33px">Wrap</span>
<span class="t" style="left:853.0px;top:109px;font-size:12px;color:#ababab;letter-spacing:0.00px;transform:scaleX(0.909);transform-origin:0 0">Text</span>
<span class="t" style="left:909.5px;top:59px;font-size:12px;color:#ababab;letter-spacing:-0.08px">Bring Forward</span>
<span class="t" style="left:909.5px;top:82px;font-size:12px;color:#ababab;letter-spacing:-0.25px">Send Backward</span>
<span class="t" style="left:910.0px;top:105px;font-size:12px;color:#262626;letter-spacing:0.38px">Align</span>
<span class="t" style="left:945.0px;top:128px;font-size:12px;color:#666666;letter-spacing:-0.25px">Arrange</span>
<span class="t" style="left:1031.5px;top:59px;font-size:12px;color:#ababab;letter-spacing:0.00px">Group</span>
<span class="t" style="left:1031.5px;top:82px;font-size:12px;color:#ababab;letter-spacing:0.17px">Ungroup</span>
<span class="t" style="left:1031.5px;top:105px;font-size:12px;color:#ababab;letter-spacing:-0.10px">Rotate</span>
<span class="t" style="left:1116.5px;top:59px;font-size:12px;color:#262626;letter-spacing:0.00px">Find</span>
<span class="t" style="left:1116.5px;top:82px;font-size:12px;color:#262626;letter-spacing:-0.42px">Replace</span>
<span class="t" style="left:1116.5px;top:105px;font-size:12px;color:#262626;letter-spacing:-0.30px">Select</span>
<span class="t" style="left:1110.5px;top:128px;font-size:12px;color:#666666;letter-spacing:0.17px">Editing</span>
<span class="t" style="left:168.5px;top:96px;font-size:13px;color:#ababab;letter-spacing:0.00px;font-weight:700">B</span>
<span class="t" style="left:192.0px;top:96px;font-size:13px;color:#ababab;letter-spacing:0.00px;font-weight:700;font-style:italic;font-family:'Liberation Serif', serif;transform:scaleX(1.400);transform-origin:0 0">I</span>
<span class="t" style="left:212.5px;top:96px;font-size:13px;color:#ababab;letter-spacing:0.00px">U</span>
<span class="t" style="left:276.0px;top:96px;font-size:13px;color:#ababab;letter-spacing:0.00px;transform:scaleX(0.938);transform-origin:0 0">Aa</span>
<span class="t" style="left:234.4px;top:96px;font-size:13px;color:#ababab;letter-spacing:0.00px;font-weight:700">x</span>
<span class="t" style="left:243.0px;top:104px;font-size:6px;color:#ababab;letter-spacing:0.00px">2</span>
<span class="t" style="left:256.3px;top:96px;font-size:13px;color:#ababab;letter-spacing:0.00px;font-weight:700">x</span>
<span class="t" style="left:265.0px;top:96px;font-size:6px;color:#ababab;letter-spacing:0.00px">2</span>
<span class="t" style="left:327.6px;top:66px;font-size:14px;color:#ababab;letter-spacing:0.00px">A</span>
<span class="t" style="left:350.8px;top:69px;font-size:11px;color:#ababab;letter-spacing:0.00px">A</span>
<span class="t" style="left:379.0px;top:66px;font-size:10px;color:#ababab;letter-spacing:0.00px">A</span>
<span class="t" style="left:318.0px;top:95px;font-size:11px;color:#ababab;letter-spacing:0.00px">AV</span>
<span class="t" style="left:363.5px;top:95px;font-size:15px;color:#ababab;letter-spacing:0.00px">A</span>
<span class="t" style="left:441.0px;top:63px;font-size:6px;color:#ababab;letter-spacing:0.00px">1</span>
<span class="t" style="left:442.0px;top:69px;font-size:6px;color:#ababab;letter-spacing:0.00px">2</span>
<span class="t" style="left:441.0px;top:75px;font-size:6px;color:#ababab;letter-spacing:0.00px">3</span>
<span class="t" style="left:581.3px;top:63px;font-size:15px;color:#555;letter-spacing:0.00px;transform:scaleX(1.214);transform-origin:0 0">¶</span>
<span class="t" style="left:614.1px;top:54px;font-size:30px;color:#4a6fb6;letter-spacing:0.00px;font-weight:700;transform:scaleX(0.865);transform-origin:0 0">A</span>
<span class="t" style="left:671.3px;top:62px;font-size:12.5px;color:#4a6c9c;letter-spacing:0.00px">A</span>
<span class="t" style="left:1098.2px;top:78px;font-size:10px;color:#444;letter-spacing:0.00px;font-weight:700;transform:scaleX(0.800);transform-origin:0 0">a</span>
<span class="t" style="left:1103.0px;top:78px;font-size:10px;color:#b5b5b5;letter-spacing:0.00px">b</span>
<span class="t" style="left:1103.6px;top:86px;font-size:10px;color:#444;letter-spacing:0.00px;font-weight:700">a</span>
<span class="t" style="left:1109.0px;top:86px;font-size:10px;color:#5b7ba5;letter-spacing:0.00px;font-weight:700">c</span>
<span class="t" style="left:7.1px;top:155px;font-size:21px;color:#077568;letter-spacing:0.00px;transform:scaleX(0.939);transform-origin:0 0">Pages</span>
<span class="t" style="left:67.0px;top:337px;font-size:11px;color:#333;letter-spacing:0.00px;font-weight:700">1</span>
<span class="t" style="left:7.5px;top:968px;font-size:11px;color:#fff;letter-spacing:-0.32px">PAGE: 1 OF 1</span>
<span class="t" style="left:1225.5px;top:968px;font-size:11px;color:#fff;letter-spacing:-0.25px">68%</span>
<span class="t" style="left:1210.0px;top:991px;font-size:12px;color:#fff;letter-spacing:-0.42px">4:46 PM</span>
<span class="t" style="left:1204.0px;top:1008px;font-size:12px;color:#fff;letter-spacing:0.00px">6/20/2023</span>
</div>
</div>
</body></html>
